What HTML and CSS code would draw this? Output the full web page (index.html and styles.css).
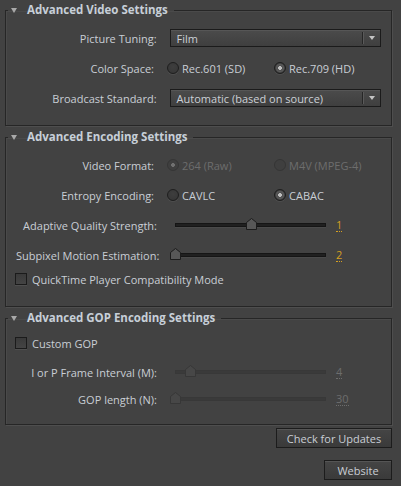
FILE: index.html
```html
<!DOCTYPE html>
<html lang="en">
<head>
<meta charset="utf-8">
<title>Advanced Settings</title>
<link rel="stylesheet" href="styles.css">
</head>
<body>
<div class="panel">
  <fieldset class="group group-video">
    <legend class="group-title"><span class="twisty"></span>Advanced Video Settings</legend>
    <div class="row">
      <span class="label">Picture Tuning:</span>
      <div class="select"><span class="select-value">Film</span><span class="select-btn"><span class="arrow"></span></span></div>
    </div>
    <div class="row">
      <span class="label">Color Space:</span>
      <div class="options">
        <span class="option"><span class="radio"></span>Rec.601 (SD)</span>
        <span class="option"><span class="radio checked"></span>Rec.709 (HD)</span>
      </div>
    </div>
    <div class="row">
      <span class="label">Broadcast Standard:</span>
      <div class="select"><span class="select-value">Automatic (based on source)</span><span class="select-btn"><span class="arrow"></span></span></div>
    </div>
  </fieldset>

  <fieldset class="group group-encoding">
    <legend class="group-title"><span class="twisty"></span>Advanced Encoding Settings</legend>
    <div class="row">
      <span class="label">Video Format:</span>
      <div class="options disabled">
        <span class="option"><span class="radio checked"></span>264 (Raw)</span>
        <span class="option"><span class="radio"></span>M4V (MPEG-4)</span>
      </div>
    </div>
    <div class="row">
      <span class="label">Entropy Encoding:</span>
      <div class="options">
        <span class="option"><span class="radio"></span>CAVLC</span>
        <span class="option"><span class="radio checked"></span>CABAC</span>
      </div>
    </div>
    <div class="row">
      <span class="label">Adaptive Quality Strength:</span>
      <div class="slider">
        <span class="track"></span>
        <span class="thumb" style="--pos: 0.5"><svg width="11" height="12" viewBox="0 0 11 12"><path d="M5.5 0.5 L10.5 4.5 L10.5 11.5 L0.5 11.5 L0.5 4.5 Z"/></svg></span>
      </div>
      <span class="value">1</span>
    </div>
    <div class="row">
      <span class="label">Subpixel Motion Estimation:</span>
      <div class="slider">
        <span class="track"></span>
        <span class="thumb" style="--pos: 0"><svg width="11" height="12" viewBox="0 0 11 12"><path d="M5.5 0.5 L10.5 4.5 L10.5 11.5 L0.5 11.5 L0.5 4.5 Z"/></svg></span>
      </div>
      <span class="value">2</span>
    </div>
    <div class="row row-check">
      <span class="checkbox"></span><span class="check-label">QuickTime Player Compatibility Mode</span>
    </div>
  </fieldset>

  <fieldset class="group group-gop">
    <legend class="group-title"><span class="twisty"></span>Advanced GOP Encoding Settings</legend>
    <div class="row row-check row-gopcheck">
      <span class="checkbox"></span><span class="check-label">Custom GOP</span>
    </div>
    <div class="row row-interval disabled">
      <span class="label">I or P Frame Interval (M):</span>
      <div class="slider">
        <span class="track"></span>
        <span class="thumb" style="--pos: 0.1"><svg width="11" height="12" viewBox="0 0 11 12"><path d="M5.5 0.5 L10.5 4.5 L10.5 11.5 L0.5 11.5 L0.5 4.5 Z"/></svg></span>
      </div>
      <span class="value">4</span>
    </div>
    <div class="row row-length disabled">
      <span class="label">GOP length (N):</span>
      <div class="slider">
        <span class="track"></span>
        <span class="thumb" style="--pos: 0"><svg width="11" height="12" viewBox="0 0 11 12"><path d="M5.5 0.5 L10.5 4.5 L10.5 11.5 L0.5 11.5 L0.5 4.5 Z"/></svg></span>
      </div>
      <span class="value">30</span>
    </div>
  </fieldset>

  <div class="actions">
    <button class="btn btn-updates" type="button">Check for Updates</button>
    <button class="btn btn-website" type="button">Website</button>
  </div>
</div>
</body>
</html>
```

FILE: styles.css
```css
html, body {
  margin: 0;
  padding: 0;
  background: #424242;
}

body {
  font-family: "Open Sans", "Liberation Sans", sans-serif;
  font-size: 11px;
  color: #c9ced5;
}

.panel {
  width: 387px;
  padding: 3px 0 0 5px;
  display: flex;
  flex-direction: column;
}

.group {
  margin: 0 0 4px 0;
  padding: 6px 10px 12px 10px;
  border: 1px solid #262626;
  box-shadow: 1px 1px 0 #4e4e4e, inset 1px 1px 0 #4a4a4a;
  min-inline-size: 0;
}

.group-encoding {
  padding-bottom: 18px;
}

.group-gop {
  padding-top: 4px;
  padding-bottom: 13px;
  margin-bottom: 3px;
}

.group-title {
  margin-left: -8px;
  padding: 0 6px 0 3px;
  height: 14px;
  line-height: 14px;
  font-weight: 700;
  font-size: 11.5px;
  color: #c7cfd8;
  display: flex;
  align-items: center;
}

.twisty {
  width: 0;
  height: 0;
  border-left: 3.5px solid transparent;
  border-right: 3.5px solid transparent;
  border-top: 5px solid #a9a9a9;
  margin-right: 10px;
}

.row {
  display: flex;
  align-items: center;
  height: 30px;
}

.row-check {
  height: 18px;
}

.row-gopcheck {
  height: 28px;
}

.row-length {
  height: 24px;
}

.label {
  width: 141px;
  margin-right: 13px;
  text-align: right;
  white-space: nowrap;
}

/* select */
.select {
  width: 210px;
  height: 16px;
  border: 1px solid #1b1b1b;
  background: linear-gradient(#4b4b4b, #3f3f3f);
  box-shadow: inset 0 1px 0 #565656;
  display: flex;
  align-items: center;
}

.select-value {
  flex: 1;
  padding-left: 6px;
  color: #ccd1d7;
}

.select-btn {
  width: 17px;
  height: 12px;
  border-left: 1px solid #262626;
  box-shadow: inset 1px 0 0 #5a5a5a;
  display: flex;
  align-items: center;
  justify-content: center;
}

.arrow {
  width: 0;
  height: 0;
  border-left: 3px solid transparent;
  border-right: 3px solid transparent;
  border-top: 4px solid #c4c4c4;
}

/* radios */
.options {
  display: flex;
}

.option {
  display: flex;
  align-items: center;
  width: 107px;
  white-space: nowrap;
}

.radio {
  width: 10px;
  height: 10px;
  border-radius: 50%;
  border: 1px solid #1e1e1e;
  background: radial-gradient(circle at 50% 40%, #3e3e3e, #353535);
  box-shadow: 0 1px 0 #4e4e4e;
  margin-right: 3px;
}

.radio.checked {
  background: radial-gradient(circle, #bdbdbd 0 1.6px, #4a4a4a 2.2px, #5a5a5a 3.5px, #3a3a3a 5px);
}

.options.disabled .option {
  color: #6d6d6d;
}

.options.disabled .radio {
  border-color: #353535;
  background: #3f3f3f;
  box-shadow: none;
}

.options.disabled .radio.checked {
  background: radial-gradient(circle, #707070 0 1.6px, #3f3f3f 2.2px);
}

/* sliders */
.slider {
  position: relative;
  width: 162px;
  height: 14px;
}

.track {
  position: absolute;
  left: 5px;
  top: 5px;
  width: 149px;
  height: 2px;
  border: 1px solid #151515;
  background: #202020;
  box-shadow: 0 1px 0 #4a4a4a;
}

.thumb {
  position: absolute;
  top: 0;
  left: calc(var(--pos) * 151px);
  width: 11px;
  height: 12px;
}

.thumb svg {
  display: block;
}

.thumb path {
  fill: #575757;
  stroke: #1c1c1c;
  stroke-width: 1;
}

.value {
  margin-left: 4px;
  color: #d6a021;
  border-bottom: 1px dotted #d6a021;
  line-height: 12px;
}

.disabled .track {
  border-color: #383838;
  background: #3a3a3a;
  box-shadow: none;
}

.disabled .thumb path {
  fill: #474747;
  stroke: #373737;
}

.disabled .value {
  color: #6d6d6d;
  border-bottom-color: #6d6d6d;
}

/* checkbox */
.checkbox {
  width: 10px;
  height: 10px;
  border: 1px solid #1b1b1b;
  background: linear-gradient(#3a3a3a, #444444);
  box-shadow: 0 1px 0 #4f4f4f;
  margin-left: -1px;
  margin-right: 5px;
}

.check-label {
  white-space: nowrap;
}

/* buttons */
.actions {
  display: flex;
  flex-direction: column;
  align-items: flex-end;
  gap: 12px;
}

.btn {
  height: 20px;
  padding: 0;
  font-family: inherit;
  font-size: 11px;
  color: #c9ced5;
  border: 1px solid #1c1c1c;
  background: linear-gradient(#454545, #3a3a3a);
  box-shadow: inset 0 1px 0 #555555;
  border-radius: 0;
}

.btn-updates {
  width: 116px;
}

.btn-website {
  width: 68px;
}
```
